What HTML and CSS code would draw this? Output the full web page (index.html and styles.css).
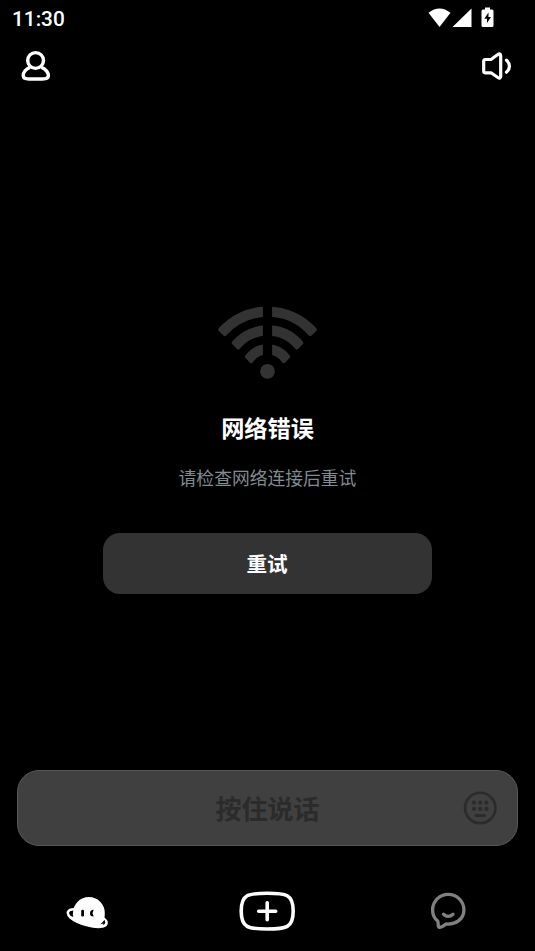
FILE: index.html
```html
<!DOCTYPE html>
<html lang="zh-CN">
<head>
<meta charset="utf-8">
<title>网络错误</title>
<link rel="stylesheet" href="styles.css">
</head>
<body>
<div class="app">
  <div class="status">
    <span class="clock">11:30</span>
    <svg class="signals" width="68" height="22" viewBox="428 7 68 22" fill="#fff">
      <path d="M428.500 12.800Q439.500 4.200 450.500 12.800L439.500 27Z"/>
      <path d="M471.500 8.500V27H452.500Z"/>
      <path fill-rule="evenodd" d="M485 7.500h5v2h2q1.500 0 1.500 1.500v14.500q0 1.500-1.500 1.500h-9q-1.500 0-1.500-1.500V11q0-1.500 1.500-1.500h2ZM488.500 12.500L484.300 18.700H487V23L491 17H488.500Z"/>
    </svg>
  </div>
  <header class="top">
    <svg width="32" height="34" viewBox="20 49 32 34" fill="none" stroke="#fff" stroke-width="3.400" stroke-linejoin="round">
      <circle cx="35.600" cy="60.500" r="7.900"/>
      <path d="M30 67.300C25.500 69 23.200 73 23.200 75.500Q23.200 79 29 79H42.500Q48.400 79 48.400 75.500C48.400 73 46 69 41.500 67.300"/>
    </svg>
    <svg width="32" height="32" viewBox="481 50 32 32" fill="none" stroke="#fff" stroke-width="3.200" stroke-linecap="round" stroke-linejoin="round">
      <path d="M485.500 59.500H491L497.500 54.800Q500.700 52.500 500.700 56V76.300Q500.700 79.500 497.500 77.200L491 72.800H485.500Q483.700 72.800 483.700 71V61.300Q483.700 59.500 485.500 59.500Z"/>
      <path d="M506.500 60.200Q512.500 66.200 506.500 72.200"/>
    </svg>
  </header>
  <main class="error">
    <svg class="wifi" width="102" height="76" viewBox="-51.500 -67 102 76">
      <g fill="#333" stroke="#333" stroke-width="4" stroke-linejoin="round">
        <path d="M-47.300-42.400A63.500 63.500 0 0 1 47.300-42.400L42.700-37.900A57 57 0 0 0-42.700-37.900Z"/>
        <path d="M-33.800-29.200A44.700 44.700 0 0 1 33.800-29.200L29.300-24.600A38.200 38.200 0 0 0-29.300-24.600Z"/>
        <path d="M-20.600-15.300A25.700 25.700 0 0 1 20.600-15.300L16.300-10.800A19.600 19.600 0 0 0-16.300-10.800Z"/>
      </g>
      <path fill="#000" d="M-4.600-67h9.200v60h-9.200z"/>
      <circle cy="-.700" r="7.400" fill="#333"/>
    </svg>
    <h1 class="title">网络错误</h1>
    <p class="hint">请检查网络连接后重试</p>
    <button class="retry">重试</button>
  </main>
  <div class="talk">
    <span class="talk-label">按住说话</span>
    <svg class="keyboard" width="34" height="34" viewBox="463 791 34 34" fill="#2b2b2b">
      <circle cx="480.200" cy="808" r="15.200" fill="none" stroke="#2b2b2b" stroke-width="2.600"/>
      <circle cx="474" cy="802.700" r="2.100"/><circle cx="480.200" cy="802.700" r="2.100"/><circle cx="486.400" cy="802.700" r="2.100"/>
      <circle cx="474" cy="808.900" r="2.100"/><circle cx="480.200" cy="808.900" r="2.100"/><circle cx="486.400" cy="808.900" r="2.100"/>
      <rect x="474.800" y="814" width="11" height="3" rx="1.200"/>
    </svg>
  </div>
  <nav class="tabs">
    <svg class="planet" width="44" height="36" viewBox="66 895 44 36">
      <path d="M73 913A15.900 15.900 0 0 1 104.800 913L104.500 919L102.500 926.500C95 928 78 924 70.500 917.500Z" fill="#fff"/>
      <path d="M74 909.200C67.500 909.200 66 913.500 70.500 917.500C78 924 95 928 102.500 926.500C108 925 107.500 921 103.500 918.500" fill="none" stroke="#fff" stroke-width="2.600"/>
      <path d="M72.800 910.800Q69 911.500 69.700 914.300Q71 916.300 73.300 917Q72.300 914 72.800 910.800ZM104.400 919.700Q106.300 923.800 100.300 924.300Q102.800 922.500 104.400 919.700Z" fill="#000"/>
      <rect x="81.200" y="909.700" width="2.800" height="6.700" rx="1.200" fill="#000"/>
      <path d="M93.700 909.700Q90 909.700 90 913.200T93.700 916.500L92.500 913.200Z" fill="#000"/>
    </svg>
    <svg class="create" width="58" height="42" viewBox="238 890 58 42" fill="none" stroke="#fff" stroke-width="3.600" stroke-linecap="round">
      <path d="M267.200 893.300C286 893.300 293.200 894 293.200 911S286 929 267.200 929S241.200 928 241.200 911S248.400 893.300 267.200 893.300Z"/>
      <path d="M258.700 911.200h17M267.200 902.700v17"/>
    </svg>
    <svg width="38" height="40" viewBox="429 891 38 40" fill="none" stroke="#808080" stroke-width="3.300" stroke-linecap="round" stroke-linejoin="round">
      <path d="M437.700 921C434.500 918.500 432.600 914.500 432.600 910A15.600 15.600 0 0 1 463.900 910C463.900 919 456 924.800 446 924C443 926.500 441.500 927.500 439.300 927.400C437.500 927.300 438.800 924 437.700 921Z"/>
      <path d="M443.500 914.200Q448.200 918.500 453 914.200"/>
    </svg>
  </nav>
</div>
</body>
</html>
```
FILE: styles.css
```css
* {
  box-sizing: border-box;
}

body {
  margin: 0;
  background: #000;
  color: #fff;
  font-family: Roboto, "Noto Sans CJK SC", sans-serif;
}

svg {
  display: block;
  flex: none;
}

.app {
  display: flex;
  flex-direction: column;
  width: 535px;
  height: 951px;
  overflow: hidden;
}

.status {
  display: flex;
  justify-content: space-between;
  align-items: center;
  height: 36px;
  padding: 0 39px 0 12px;
}

.clock {
  padding-top: 1px;
  font-size: 20.8px;
  font-weight: 500;
  line-height: 36px;
}

.top {
  display: flex;
  justify-content: space-between;
  align-items: center;
  height: 60px;
  padding: 0 22px 0 20px;
}

.error {
  display: flex;
  flex: 1;
  flex-direction: column;
  align-items: center;
  padding: 209px 1px 0 0;
}

.title {
  margin: 30px 0 0;
  padding-left: 1px;
  font-size: 23.2px;
  font-weight: 700;
  line-height: 36px;
}

.hint {
  margin: 18px 0 0;
  padding-left: 1px;
  color: #838a91;
  font-size: 17.8px;
  line-height: 28px;
}

.retry {
  width: 329px;
  height: 61px;
  margin-top: 40px;
  padding: 0 0 2px;
  border: 0;
  border-radius: 17px;
  background: #333;
  color: #fff;
  font-family: inherit;
  font-size: 20.6px;
  font-weight: 700;
}

.talk {
  display: grid;
  grid-template-columns: 1fr auto 1fr;
  align-items: center;
  flex: none;
  height: 76px;
  margin: 0 17px;
  padding: 0 20px;
  border: 1px solid #585858;
  border-radius: 22px;
  background: #404040;
}

.talk-label {
  grid-column: 2;
  padding-top: 3px;
  color: #2b2b2b;
  font-size: 26px;
  font-weight: 700;
  line-height: 40px;
}

.keyboard {
  justify-self: end;
}

.tabs {
  display: flex;
  justify-content: space-between;
  align-items: center;
  flex: none;
  height: 105px;
  padding: 25px 68px 0 66px;
}

.planet {
  margin-top: 4px;
}

.create {
  margin-left: -5px;
}
```
